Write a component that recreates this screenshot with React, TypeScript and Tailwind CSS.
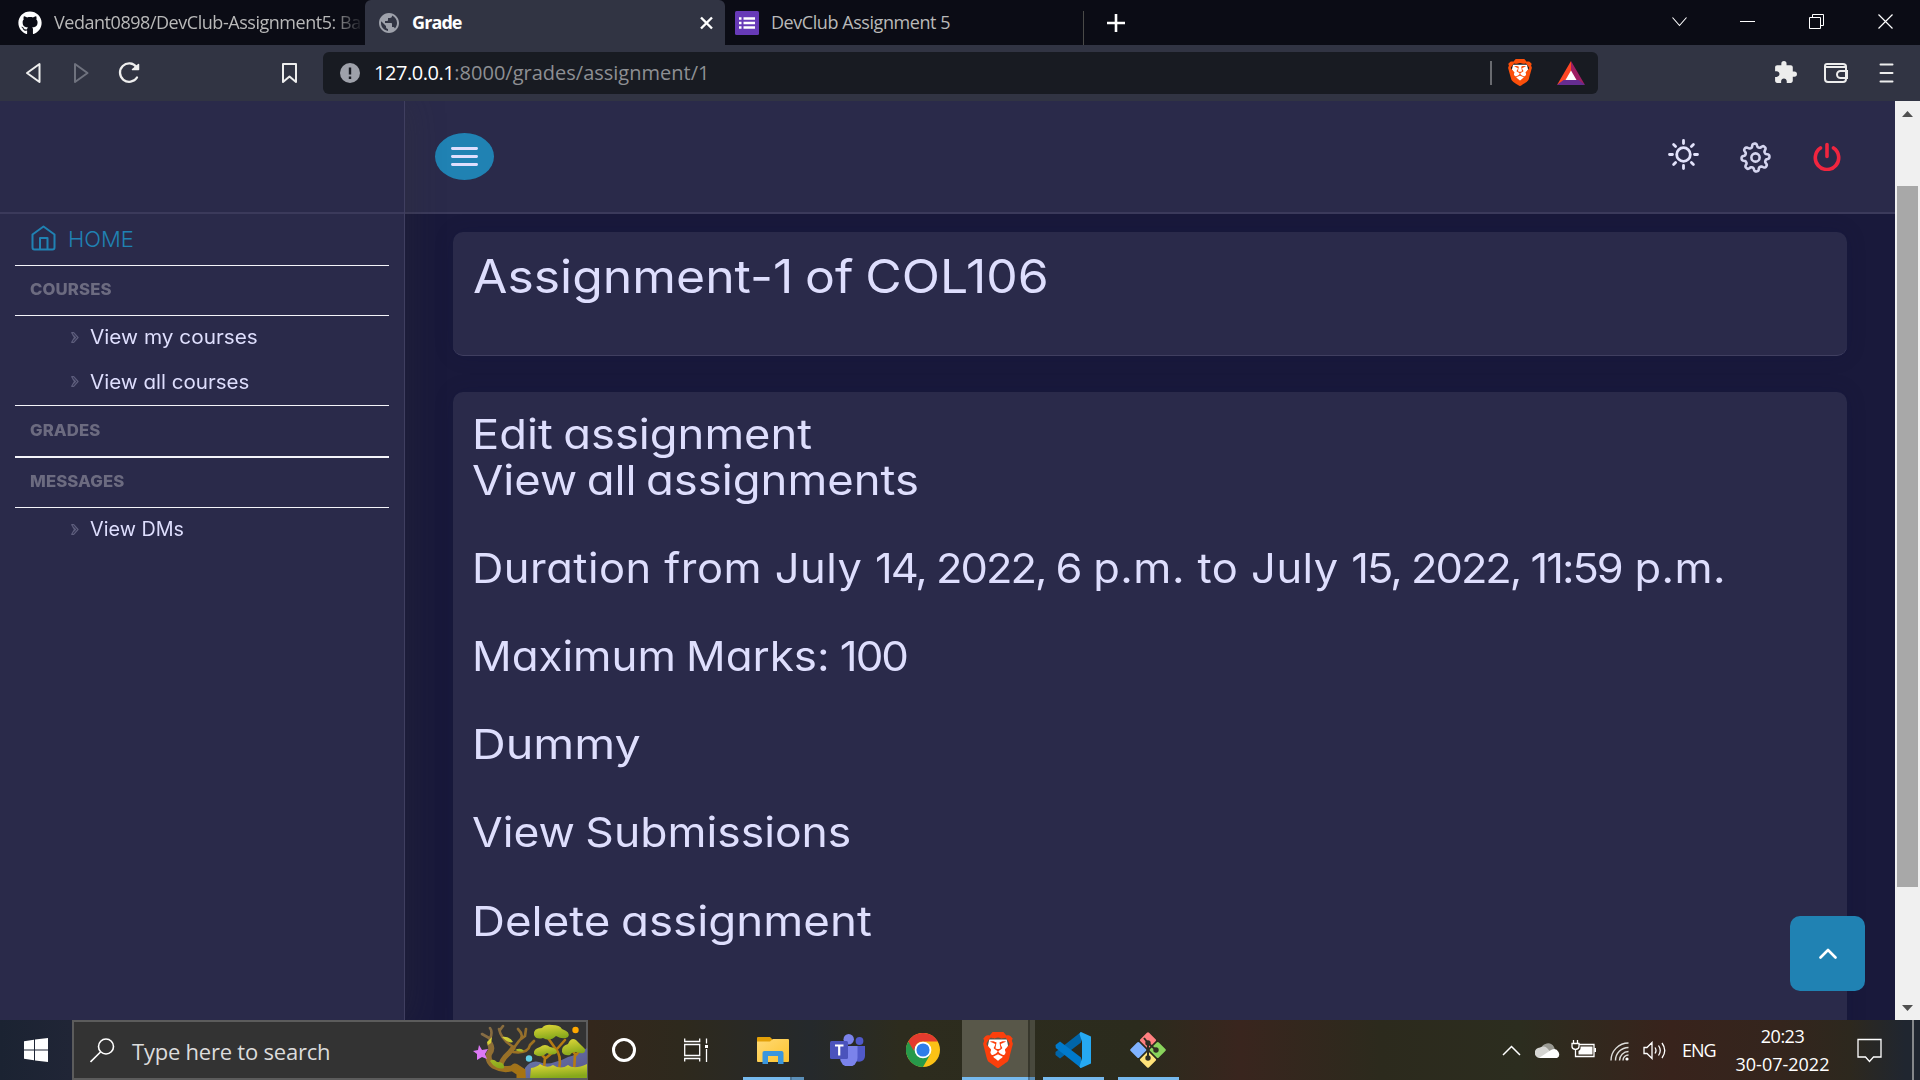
import type { ReactNode } from "react";
import { FaGithub } from "react-icons/fa";
import { MdExtension, MdPublic } from "react-icons/md";
import { SiBrave } from "react-icons/si";

const ui = "font-['Open_Sans',sans-serif] whitespace-nowrap";

function BraveLion({ className, color }: { className: string; color: string }) {
  return (
    <span className={`relative inline-block shrink-0 ${className}`}>
      <svg viewBox="0 0 24 24" preserveAspectRatio="none" className="absolute inset-0 h-full w-full">
        <path d="M5 5h14l1 4-2 6-6 6-6-6-2-6z" fill="#fff" />
      </svg>
      <SiBrave preserveAspectRatio="none" viewBox="1.7 0 20.6 24" className="absolute inset-0 h-full w-full" color={color} />
    </span>
  );
}

function TabStrip() {
  return (
    <div className={`flex h-[45px] bg-[#0b0c15] text-[18px] ${ui}`}>
      <div className="flex w-[365px] items-center pl-[18px] text-[#b9b9b9]">
        <FaGithub className="size-6 shrink-0 text-white" />
        <span className="ml-3 w-[306px] overflow-hidden tracking-[-0.46px] [mask-image:linear-gradient(to_right,black_275px,transparent_310px)]">
          Vedant0898/DevClub-Assignment5: Bac
        </span>
      </div>
      <div className="flex w-[360px] items-center rounded-t-md bg-[#313443] pl-3 font-bold text-white">
        <MdPublic className="size-6 text-[#9ea1ab]" />
        <span className="ml-[11px] flex-1 tracking-[-0.9px]">Grade</span>
        <svg className="mr-3 h-[14px] w-[13px]" viewBox="0 0 13 14">
          <path d="M1 1.500 12 12.500M12 1.500 1 12.500" stroke="#fff" strokeWidth="2.400" />
        </svg>
      </div>
      <div className="flex w-[359px] items-center pl-[10px] text-[#b9b9b9]">
        <svg className="size-6" viewBox="0 0 24 24">
          <rect width="24" height="24" rx="1.500" fill="#673ab7" />
          <path d="M4 7.500h2.500M4 12h2.500M4 16.500h2.500M8.500 7.500H20M8.500 12H20M8.500 16.500H20" stroke="#fff" strokeWidth="2.600" />
        </svg>
        <span className="ml-3 flex-1 tracking-[-0.44px]">DevClub Assignment 5</span>
        <span className="mt-[11px] h-[34px] w-px bg-[#4a4a48]" />
      </div>
      <div className="flex flex-1 items-center pl-[22px]">
        <svg className="size-[20px]" viewBox="0 0 20 20">
          <path d="M10 1v18M1 10h18" stroke="#fff" strokeWidth="2.600" />
        </svg>
      </div>
      <svg className="mt-[13px] mr-[25px] h-[17px] w-[224px]" viewBox="0 0 224 17" fill="none" stroke="#fff">
        <path d="M1.500 4.500 8.500 12.500 15.500 4.500" strokeWidth="1.100" />
        <path d="M69 8.500h15" />
        <path d="M138.500 4.500h11v11h-11zM141.500 4.500v-3h11v11h-3" />
        <path d="M207.500 1.500l14 14M221.500 1.500l-14 14" strokeWidth="1.200" />
      </svg>
    </div>
  );
}

function Toolbar() {
  return (
    <div className="flex h-14 items-center bg-[#313443]">
      <svg className="ml-[24px] h-6 w-[276px] shrink-0" viewBox="0 0 276 24" fill="none" stroke="#eeeeee" strokeWidth="2" strokeLinejoin="round">
        <path d="M15.500 3v18L3 12z" />
        <path d="M51 3v18l12.500-9z" stroke="#6f727e" />
        <path d="M112.500 6A9.200 9.200 0 1 0 113 16.500" strokeWidth="2.300" strokeLinecap="round" />
        <path d="M108.500 8.500h6V3.500z" fill="#eee" strokeWidth="1.500" />
        <path d="M259 3h13v18l-6.500-5.500L259 21z" />
      </svg>
      <div className={`ml-[23px] flex h-[42px] w-[1275px] shrink-0 items-center rounded-md bg-[#181b22] pl-[17px] text-[20px] ${ui}`}>
        <svg className="size-5" viewBox="0 0 20 20">
          <circle cx="10" cy="10" r="10" fill="#9ea1aa" />
          <path d="M10 4.500v7M10 13.500v2.400" stroke="#181b22" strokeWidth="2.400" />
        </svg>
        <span className="ml-[14px] tracking-[-0.45px] text-white">127.0.0.1</span>
        <span className="flex-1 text-[#8d8f93]">:8000/grades/assignment/1</span>
        <span className="h-6 w-0.5 bg-[#696b70]" />
        <BraveLion className="mb-px ml-4 h-[27px] w-6" color="#fb4f0a" />
        <svg className="mr-[13px] ml-[25px] h-6 w-7" viewBox="0 0 28 24">
          <path d="M14 0 0 24l14-8z" fill="#ff4724" />
          <path d="M14 0v16l14 8z" fill="#9e1f63" />
          <path d="M0 24h28l-6.500-5h-15z" fill="#662d91" />
          <path d="M14 9.500 8.500 19h11z" fill="#fff" />
        </svg>
      </div>
      <div className="ml-auto flex items-center text-[#ededed]">
        <MdExtension className="mb-[2px] size-[25px]" />
        <svg className="mb-px ml-[25px] h-[22px] w-[26px]" viewBox="0 0 26 22" fill="none" stroke="currentColor" strokeWidth="2">
          <path d="M23 6V4.500Q23 2 20 2H4Q2 2 2 4v13q0 3 3 3h15q3 0 3-3V6q0-1-1.500-1H3" />
          <path d="M24 9h-6.500a3.500 3.500 0 0 0 0 7H24z" />
        </svg>
        <svg className="mr-[26px] mb-px ml-[30px] h-[22px] w-[15px]" viewBox="0 0 15 22" stroke="currentColor" strokeWidth="2" strokeLinecap="round">
          <path d="M1.500 2.500h12M1.500 11h12M1.500 19.500h12" />
        </svg>
      </div>
    </div>
  );
}

function SideHeading({ children, className = "" }: { children: ReactNode; className?: string }) {
  return (
    <div className={`flex h-[50px] items-center border-b border-[#f4f4fa] pb-[3px] pl-[15px] text-[16px] font-extrabold text-[#6c6b80] ${className}`}>
      <span className="origin-left scale-x-[1.045] tracking-[0.1px]">{children}</span>
    </div>
  );
}

function SideLink({ children, className }: { children: ReactNode; className: string }) {
  return (
    <div className="flex h-[44.500px] items-center pb-px pl-[56px] text-[19.500px] text-[#dedefd]">
      <svg className="mr-[11px] mb-px h-[11px] w-2" viewBox="0 0 8 11" fill="none" stroke="#5d5d7c" strokeWidth="1.200" strokeLinejoin="round">
        <path d="M.7.700h2L7 5.500 2.700 10.300h-2L3.500 5.500zM1.500 2.500l3 3-3 3" />
      </svg>
      <span className={`origin-left whitespace-nowrap ${className}`}>{children}</span>
    </div>
  );
}

function Sidebar() {
  return (
    <aside className="relative z-10 flex w-[405px] shrink-0 flex-col border-r border-[#403f60] bg-[#2a2a4a] shadow-[0_0_35px_rgba(55,55,55,0.35)]">
      <div className="h-[113px] border-b-2 border-[#3b3a5b]" />
      <nav className="mr-[15px] ml-[15px] flex flex-col">
        <div className="flex h-[52px] items-center border-b border-[#f4f4fa] pl-[16px] text-[22px] font-light text-[#2082b3]">
          <svg className="mb-1 h-[26px] w-[25px]" viewBox="0 0 25 26" fill="none" stroke="currentColor" strokeWidth="2" strokeLinejoin="round">
            <path d="M12.500 1.500 23.500 9.500V22.500Q23.500 24.500 21.500 24.500H3.500Q1.500 24.500 1.500 22.500V9.500Z" />
            <path d="M9 24V13h7.500v11" />
          </svg>
          <span className="ml-[12px]">HOME</span>
        </div>
        <SideHeading>COURSES</SideHeading>
        <SideLink className="scale-x-[1.065]">View my courses</SideLink>
        <SideLink className="scale-x-[1.055]">View all courses</SideLink>
        <div className="border-t border-[#f4f4fa]" />
        <SideHeading className="h-[52px] border-b-2">GRADES</SideHeading>
        <SideHeading>MESSAGES</SideHeading>
        <SideLink className="scale-x-[1.015]">View DMs</SideLink>
      </nav>
    </aside>
  );
}

const gearPath = (() => {
  const pts: string[] = [];
  for (let i = 0; i <= 160; i++) {
    const a = (i / 160) * Math.PI * 2;
    const wave = Math.tanh(1.8 * Math.cos(8 * a + 0.6));
    const r = 11.8 + 1.8 * wave;
    pts.push(`${(15 + r * Math.cos(a)).toFixed(2)} ${(15 + r * Math.sin(a)).toFixed(2)}`);
  }
  return `M${pts.join("L")}Z`;
})();

function PageHeader() {
  return (
    <header className="flex h-[113px] shrink-0 items-center border-b-2 border-[#3b3a5b] bg-[#2a2a4a] pl-[30px]">
      <button className="flex h-[47px] w-[59px] items-center justify-center rounded-[50%] bg-[#2082b3]">
        <svg className="h-[19px] w-[27px]" viewBox="0 0 27 19" stroke="#dedefd" strokeWidth="2.800" strokeLinecap="round">
          <path d="M1.400 1.500h24.200M1.400 9.500h24.200M1.400 17.500h24.200" />
        </svg>
      </button>
      <div className="mr-[54px] ml-auto flex items-center">
        <svg className="mb-[5px] size-[31px]" viewBox="0 0 31 31" fill="none" stroke="#e2e2fb" strokeWidth="2.800" strokeLinecap="round">
          <circle cx="15.500" cy="15.500" r="6.800" />
          <path d="M15.500 1.500v3M15.500 26.500v3M1.500 15.500h3M26.500 15.500h3M5.600 5.600l2 2M23.400 23.400l2 2M5.600 25.400l2-2M23.400 7.600l2-2" />
        </svg>
        <svg className="mt-[2px] ml-[41px] size-[31px]" viewBox="0 0 30 30" fill="none" stroke="#d4d4ef" strokeWidth="2.500">
          <path d={gearPath} />
          <circle cx="15" cy="15" r="4" />
        </svg>
        <svg className="mb-px ml-[42px] h-[29px] w-[28px]" viewBox="0 0 28 29" fill="none" stroke="#f1253f" strokeWidth="3.600" strokeLinecap="round">
          <path d="M14 2.500v12M7.500 6A11.700 11.700 0 1 0 20.500 6" />
        </svg>
      </div>
    </header>
  );
}

function Line({ children, className }: { children: ReactNode; className: string }) {
  return (
    <p className={`h-[44.200px] w-max origin-left text-[41px] leading-[44.200px] whitespace-nowrap ${className}`}>{children}</p>
  );
}

function Digits({ children }: { children: ReactNode }) {
  return <span className="tracking-[-1.900px]">{children}</span>;
}

function Content() {
  return (
    <div className="relative flex min-h-0 flex-1 flex-col overflow-hidden bg-[#19193b] pr-[48px] pl-[48px] text-[#dedefd]">
      <section className="mt-[18px] h-[124px] shrink-0 rounded-[10px] border-b border-[#403f60] bg-[#2a2a4a] pt-[19px] pl-[20px] shadow-[0_0_20px_rgba(8,21,66,0.15)]">
        <h1 className="w-max origin-left scale-x-[1.085] text-[46px] leading-[50px] [word-spacing:-2px] whitespace-nowrap">Assignment-1 of COL106</h1>
      </section>
      <section className="mt-9 h-[700px] shrink-0 rounded-t-[10px] bg-[#2a2a4a] pt-[20px] pl-[19px] shadow-[0_0_20px_rgba(8,21,66,0.15)]">
        <Line className="scale-x-[1.105] [word-spacing:-2px]">Edit assignment</Line>
        <Line className="mt-[1.800px] scale-x-[1.108] [word-spacing:-3px]">View all assignments</Line>
        <Line className="mt-[43.800px] scale-x-[1.060] tracking-[0.45px]">
          Duration from July <Digits>14, 2022, 6</Digits> p.m. to July <Digits>15, 2022, 11:59</Digits> p.m.
        </Line>
        <Line className="mt-[43.800px] scale-x-[1.070] [word-spacing:-2px]">
          Maximum Marks: <Digits>100</Digits>
        </Line>
        <Line className="mt-[43.800px] scale-x-[1.140]">Dummy</Line>
        <Line className="mt-[43.800px] scale-x-[1.085] [word-spacing:-2px]">View Submissions</Line>
        <Line className="mt-[44.500px] scale-x-[1.114] [word-spacing:-2px]">Delete assignment</Line>
      </section>
      <button className="absolute right-[30px] bottom-[29px] flex size-[75px] items-center justify-center rounded-[10px] bg-[#2082b3]">
        <svg className="mb-px h-[11px] w-[18px]" viewBox="0 0 18 11" fill="none" stroke="#fff" strokeWidth="2.600" strokeLinecap="round" strokeLinejoin="round">
          <path d="M1.500 9.500 9 2l7.500 7.500" />
        </svg>
      </button>
    </div>
  );
}

function Scrollbar() {
  return (
    <div className="flex w-[25px] shrink-0 flex-col items-center bg-[#f0f0f0]">
      <svg className="mt-[10px] h-[6px] w-[11px]" viewBox="0 0 11 6"><path d="M0 6 5.500 0 11 6z" fill="#505050" /></svg>
      <div className="mt-[69px] h-[701px] w-[21px] bg-[#a8a8a8]" />
      <svg className="mt-auto mb-[9px] h-[6px] w-[11px]" viewBox="0 0 11 6"><path d="M0 0h11L5.500 6z" fill="#505050" /></svg>
    </div>
  );
}

function ForestArt() {
  return (
    <svg className="-mr-px h-[56px] w-[114px]" viewBox="0 0 114 56">
      <defs>
        <linearGradient id="leaf" x1="0" y1="0" x2="0.300" y2="1">
          <stop offset="0" stopColor="#e3d93a" />
          <stop offset="1" stopColor="#86a81b" />
        </linearGradient>
        <linearGradient id="bark" gradientUnits="userSpaceOnUse" x1="0" y1="5" x2="45" y2="56">
          <stop offset="0" stopColor="#7d6a50" />
          <stop offset="1" stopColor="#a87410" />
        </linearGradient>
        <linearGradient id="hill" x1="0" y1="0" x2="1" y2="1">
          <stop offset="0" stopColor="#6a7cae" />
          <stop offset="1" stopColor="#59548c" />
        </linearGradient>
      </defs>
      <path d="M52 46Q58 38 66 40 74 43 82 40 90 38 95 35 104 33 114 26V56H52z" fill="url(#hill)" />
      <g fill="none" stroke="url(#bark)" strokeLinecap="round">
        <path d="M17 22Q20 27 16 32 14 39 21 44 30 49 40 46 52 46 49 60" strokeWidth="6" />
        <path d="M42 46 48 50 48 60" strokeWidth="9" />
        <path d="M27 46Q28 38 36 31L40 26" strokeWidth="5" />
        <path d="M17 22Q18 18 16 16M16 16 9 12M17 17Q20 10 17 6M26 7Q28 17 39 24M45 7Q52 14 46 19L40 27M53 7 52 14 48 17M40 30Q55 32 57 23L61 19M27 8l3-4" strokeWidth="2.600" />
      </g>
      <g fill="none" stroke="#b67b12" strokeLinecap="round">
        <path d="M86 48Q89 33 82 26L75 16M84 27l8-9M71 46 72 36l-6-6M73 36l6-5M101 50 102 32l-6-7M103 33l6-7" strokeWidth="2.600" />
      </g>
      <g fill="url(#leaf)">
        <path d="M61 13Q60 6 69 6 72 2 79 3 87 3 89 7 98 10 95 15 90 18 83 14 77 20 70 16 63 18 61 13z" />
        <path d="M61 32Q60 27 67 25 72 21 77 25 84 26 84 31 79 34 74 31 68 37 61 32z" />
        <path d="M89 30Q88 24 95 22 98 15 103 18 108 23 112 27 113 32 107 31 100 28 97 33 91 34 89 30z" />
        <path d="M57 56 58 46Q64 45 67 42 74 47 80 43 88 48 95 43 101 48 114 42V56z" />
        <path d="M17 39Q20 36 24 40 32 40 31 46 26 48 20 43zM29 15Q37 14 40 20 36 22 29 15zM42 28Q48 25 51 29 48 31 42 28zM14 20 19 15 18 21 15 23z" />
      </g>
      <path d="m6 23 3 5 6-1-3 5 2 5-5-2-5 3V32L0 29l5-1z" fill="#dd79f5" />
      <circle cx="56" cy="36.500" r="3.200" fill="#62cfe8" />
      <circle cx="102.500" cy="8" r="3.200" fill="#ffa800" />
    </svg>
  );
}

function TaskSlot({ children, bar = "" }: { children: ReactNode; bar?: string }) {
  return (
    <div className="relative flex w-[75px] items-center justify-center">
      {children}
      {bar && <span className={`absolute bottom-0 left-[8px] h-[3px] w-[61px] ${bar}`} />}
    </div>
  );
}

function Taskbar() {
  return (
    <div className={`flex h-[60px] bg-[linear-gradient(90deg,#1b2332_0px,#202536_70px,#33271c_590px,#2e291d_680px,#25292c_810px,#2d2c1e_900px,#2b2b1d_1140px,#39251e_1240px,#2c2a1d_1380px,#2c2d1f_1520px,#38231c_1670px,#34251d_1780px,#2d281e_1850px,#202630_1905px)] text-white ${ui}`}>
      <div className="flex w-[72px] items-center justify-center">
        <svg className="size-6" viewBox="0 0 24 24" fill="#fff">
          <path d="M0 3.200 10 1.800V11.500H0zM11 1.600 24 0v11.500H11zM0 12.500h10v9.700L0 20.800zM11 12.500h13V24l-13-1.600z" />
        </svg>
      </div>
      <div className="flex w-[516px] items-center border-2 border-[#5c5c5c] bg-[#333333] pl-4">
        <svg className="size-[25px]" viewBox="0 0 25 25" fill="none" stroke="#fff" strokeWidth="1.600">
          <circle cx="16" cy="8.500" r="7.500" />
          <path d="M10.500 14 .500 24" />
        </svg>
        <span className="mt-[3px] ml-[17px] flex-1 text-[22px] tracking-[-0.22px] text-[#dcdcdc]">Type here to search</span>
        <ForestArt />
      </div>
      <div className="flex w-[72px] items-center justify-center">
        <span className="size-[24px] rounded-full border-[3px] border-white" />
      </div>
      <div className="mr-[3px] flex w-[72px] items-center justify-center">
        <svg className="size-6" viewBox="0 0 24 24" fill="none" stroke="#fff" strokeWidth="1.300">
          <path d="M.700 6.500h15v11H.700zM.700.500v3h15v-3M.700 23.500v-3h15v3M22.500.500v5M22.500 11v13" />
          <path d="M21 7h3v3h-3z" fill="#fff" stroke="none" />
        </svg>
      </div>
      <TaskSlot bar="bg-[linear-gradient(90deg,#76b9ed_47px,#4d7596_47px,#4d7596_49px,#5b8fb9_49px)]">
        <svg className="h-[27px] w-8" viewBox="0 0 32 27">
          <defs>
            <linearGradient id="folder" x1="0" y1="0" x2="1" y2="1">
              <stop offset="0" stopColor="#ffd975" />
              <stop offset="1" stopColor="#fdc42e" />
            </linearGradient>
          </defs>
          <path d="M0 1q0-1 1-1h12l3 3v5H0z" fill="#e3a008" />
          <path d="M0 4.500h13l3-2.500h15q1 0 1 1v21q0 1-1 1H1q-1 0-1-1z" fill="url(#folder)" />
          <path d="M5.500 27V16q0-2 2-2h17q2 0 2 2v11H21v-8H11v8z" fill="#3a96dd" />
        </svg>
      </TaskSlot>
      <TaskSlot>
        <svg className="h-8 w-[35px]" viewBox="0 0 35 32">
          <circle cx="29.500" cy="7" r="3.900" fill="#5059c9" />
          <path d="M24 12h11v10a6 6 0 0 1-9 5z" fill="#5059c9" />
          <circle cx="18.700" cy="5.200" r="5.200" fill="#7b83eb" />
          <path d="M10 12h17.500v12a8.700 8.700 0 0 1-17.500 0z" fill="#7b83eb" />
          <rect y="7" width="18" height="18" rx="1.500" fill="#4b53bc" />
          <path d="M5 11.500h8.500M9.200 11.500v10" stroke="#fff" strokeWidth="2.200" />
        </svg>
      </TaskSlot>
      <TaskSlot>
        <svg className="size-[34px]" viewBox="0 0 48 48">
          <circle cx="24" cy="24" r="24" fill="#fbc116" />
          <path d="M3.200 12A24 24 0 0 0 24 48l10.400-18H24z" fill="#27994a" />
          <path d="M3.200 12A24 24 0 0 1 44.800 12H24A12 12 0 0 0 12.500 20L11 25z" fill="#e33b2e" />
          <circle cx="24" cy="24" r="11.800" fill="#fff" />
          <circle cx="24" cy="24" r="9.300" fill="#2f7de9" />
        </svg>
      </TaskSlot>
      <div className="relative ml-[2px] flex w-[73px] items-center bg-[linear-gradient(90deg,#585749_66px,#37372c_66px,#37372c_68px,#49493d_68px)] pl-[21px]">
        <BraveLion className="h-9 w-[30px]" color="#fc3f0c" />
        <span className="absolute bottom-0 left-0 h-[3px] w-full bg-[linear-gradient(90deg,#76b9ed_66px,#4d7596_66px,#4d7596_68px,#5b8fb9_68px)]" />
      </div>
      <TaskSlot bar="bg-[#76b9ed]">
        <svg className="size-9" viewBox="0 0 36 36">
          <path d="M26 0v10.500L5 26.500l-4.500-3.500v-3z" fill="#0065a9" />
          <path d="M.500 13 5 9.500l21 16V36L.800 16z" fill="#007acc" />
          <path d="M26 0l10 4.500v27L26 36q-1 0-1.500-1.500L27 26V10L24.500 2Q25 0 26 0z" fill="#26a9f2" />
        </svg>
      </TaskSlot>
      <TaskSlot bar="bg-[#76b9ed]">
        <svg className="size-9" viewBox="0 0 36 36">
          <g transform="rotate(45 18 18)">
            <rect x="5" y="5" width="12.200" height="12.200" rx="1.500" fill="#ff8080" />
            <rect x="18.800" y="5" width="12.200" height="12.200" rx="1.500" fill="#89d35c" />
            <rect x="5" y="18.800" width="12.200" height="12.200" rx="1.500" fill="#80b3ff" />
            <rect x="18.800" y="18.800" width="12.200" height="12.200" rx="1.500" fill="#ffe37a" />
          </g>
          <path d="M14 6l4 5v14M18 11l8 7" stroke="#2f2d22" strokeWidth="2" fill="none" />
          <circle cx="18" cy="11" r="2.700" fill="#2f2d22" />
          <circle cx="26" cy="18" r="2.700" fill="#2f2d22" />
          <circle cx="18" cy="26" r="2.700" fill="#2f2d22" />
        </svg>
      </TaskSlot>
      <div className="ml-auto flex items-center text-[18px]">
        <svg className="h-[11px] w-[19px]" viewBox="0 0 19 11" fill="none" stroke="#fff" strokeWidth="1.500"><path d="M1 10 9.500 1.500 18 10" /></svg>
        <svg className="ml-[14px] h-4 w-[25px]" viewBox="0 0 25 16">
          <path d="M6 7a7 7 0 0 1 13-2l2 5H6z" fill="#9a9a93" />
          <path d="M5 16A5 5 0 0 1 5 5.500q4-2 7 .500l9 10z" fill="#d5d5d2" />
          <path d="M4 16 16 8q5-3 7.500 2 2 4-1.500 6z" fill="#fff" />
        </svg>
        <svg className="mb-[2px] ml-[11px] h-[18px] w-[25px]" viewBox="0 0 25 18" fill="none" stroke="#fff" strokeWidth="1.300">
          <path d="M8 4.500h15v12H4.500V10M24.400 8v4M2.500 0v3.500M6.500 0v3.500M1 3.500h7v3Q8 9 4.500 9.500 1 9 1 6.500zM4.500 9v7" />
          <path d="M9.500 6.500h12v8h-14V11q2.500-1 2-4.500z" fill="#fff" stroke="none" />
        </svg>
        <svg className="mt-[2px] ml-[14px] h-[19px] w-[19px]" viewBox="0 0 19 19" fill="none" stroke="#dededb" strokeWidth="1.400">
          <path d="M1 18.500A17.500 17.500 0 0 1 18.500 1M5.500 18.500A13 13 0 0 1 18.500 5.500M9.500 18.500a9 9 0 0 1 9-9M13 18.500a5.500 5.500 0 0 1 5.500-5.500" />
          <circle cx="17" cy="17" r="1.600" fill="#fff" stroke="none" />
        </svg>
        <svg className="ml-[14px] h-[19px] w-[24px]" viewBox="0 0 24 19" fill="none" stroke="#fff" strokeWidth="1.300">
          <path d="M1 6.500h3L9 1.500v16l-5-5H1zM12 6.500q2 3 0 6M15.500 4.500q3.500 5 0 10M19 2q5.500 7.500 0 15" />
        </svg>
        <span className="ml-[15px] w-[34px] tracking-[-1px]">ENG</span>
        <div className="ml-[19px] flex w-[95px] flex-col text-center leading-[28px]">
          <span className="tracking-[-0.500px]">20:23</span>
          <span>30-07-2022</span>
        </div>
        <svg className="ml-[27px] h-[25px] w-[25px]" viewBox="0 0 25 25" fill="none" stroke="#fff" strokeWidth="1.300">
          <path d="M1 1.500h23v17.500h-7.500L12.500 23.500 8.500 19H1z" />
        </svg>
        <span className="mr-[6px] ml-[30px] h-[60px] w-[2px] bg-[#85878a]" />
      </div>
    </div>
  );
}

export default function App() {
  return (
    <div className="flex h-[1080px] w-[1920px] flex-col overflow-hidden">
      <TabStrip />
      <Toolbar />
      <div className="flex h-[919px] overflow-hidden font-['Inter',sans-serif] [font-feature-settings:'cv11']">
        <Sidebar />
        <main className="flex min-w-0 flex-1 flex-col">
          <PageHeader />
          <Content />
        </main>
        <Scrollbar />
      </div>
      <Taskbar />
    </div>
  );
}
